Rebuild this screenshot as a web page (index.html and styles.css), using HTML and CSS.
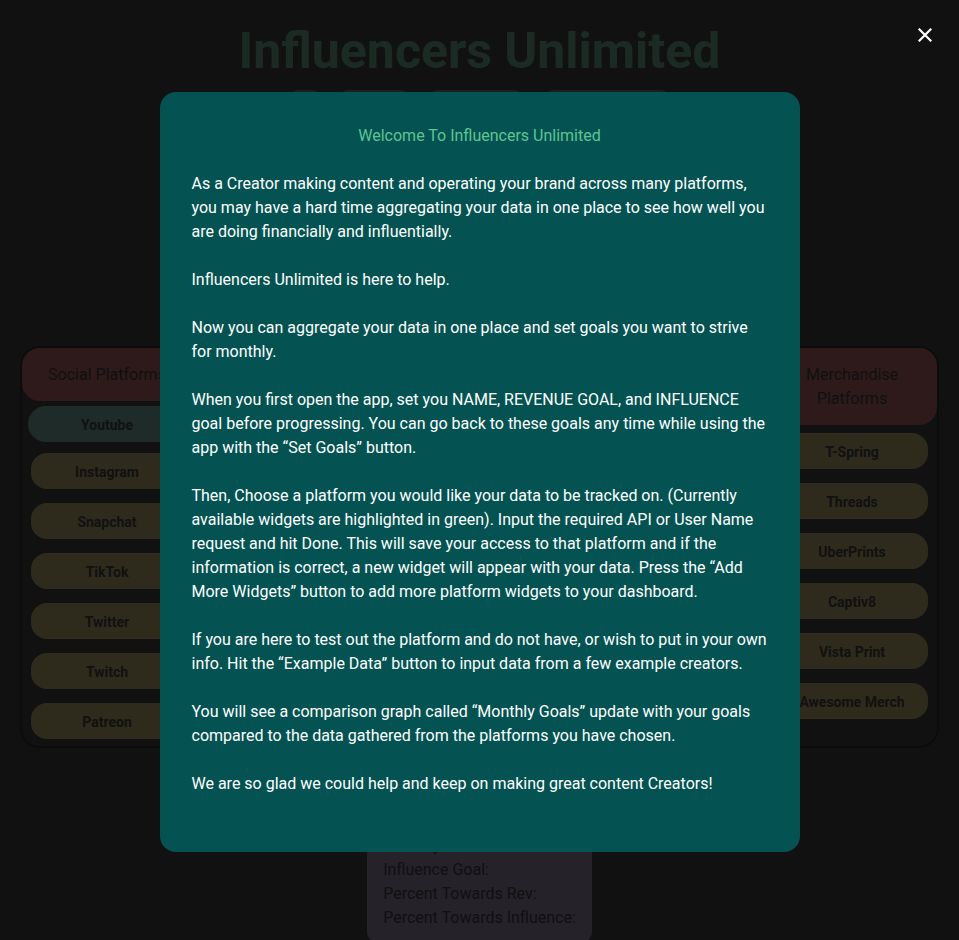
FILE: index.html
```html
<!DOCTYPE html>
<html lang="en">
<head>
<meta charset="utf-8">
<title>Influencers Unlimited</title>
<link rel="stylesheet" href="styles.css">
</head>
<body>
<div class="page">
  <h1 class="app-title">Influencers Unlimited</h1>
  <nav class="nav">
    <button class="nav-btn nav-btn-a">?</button>
    <button class="nav-btn nav-btn-b">Set Goals</button>
    <button class="nav-btn nav-btn-c">Example Data</button>
    <button class="nav-btn nav-btn-d">Add More Widgets</button>
  </nav>
  <main class="board">
    <section class="panel">
      <div class="panel-head">Social Platforms</div>
      <div class="panel-list panel-list-social">
        <button class="plat plat-active">Youtube</button>
        <button class="plat">Instagram</button>
        <button class="plat">Snapchat</button>
        <button class="plat">TikTok</button>
        <button class="plat">Twitter</button>
        <button class="plat">Twitch</button>
        <button class="plat">Patreon</button>
      </div>
    </section>
    <section class="panel">
      <div class="panel-head">Merchandise Platforms</div>
      <div class="panel-list">
        <button class="plat">T-Spring</button>
        <button class="plat">Threads</button>
        <button class="plat">UberPrints</button>
        <button class="plat">Captiv8</button>
        <button class="plat">Vista Print</button>
        <button class="plat">Awesome Merch</button>
      </div>
    </section>
  </main>
  <div class="stats">
    <div>Name:</div>
    <div>Monthly Revenue Goal:</div>
    <div>Influence Goal:</div>
    <div>Percent Towards Rev:</div>
    <div>Percent Towards Influence:</div>
  </div>
</div>

<div class="overlay">
  <button class="close" aria-label="Close">
    <svg width="14" height="14" viewBox="0 0 14 14"><path d="M1.5 1.5 L12.5 12.5 M12.5 1.5 L1.5 12.5" stroke="#ffffff" stroke-width="2.2" stroke-linecap="square" fill="none"/></svg>
  </button>
  <div class="modal">
    <h2 class="modal-title">Welcome To Influencers Unlimited</h2>
    <p>As a Creator making content and operating your brand across many platforms, you may have a hard time aggregating your data in one place to see how well you are doing financially and influentially.</p>
    <p>Influencers Unlimited is here to help.</p>
    <p>Now you can aggregate your data in one place and set goals you want to strive for monthly.</p>
    <p>When you first open the app, set you NAME, REVENUE GOAL, and INFLUENCE goal before progressing. You can go back to these goals any time while using the app with the “Set Goals” button.</p>
    <p>Then, Choose a platform you would like your data to be tracked on. (Currently available widgets are highlighted in green). Input the required API or User Name request and hit Done. This will save your access to that platform and if the information is correct, a new widget will appear with your data. Press the “Add More Widgets” button to add more platform widgets to your dashboard.</p>
    <p>If you are here to test out the platform and do not have, or wish to put in your own info. Hit the “Example Data” button to input data from a few example creators.</p>
    <p>You will see a comparison graph called “Monthly Goals” update with your goals compared to the data gathered from the platforms you have chosen.</p>
    <p>We are so glad we could help and keep on making great content Creators!</p>
  </div>
</div>
</body>
</html>
```

FILE: styles.css
```css
* { box-sizing: border-box; }

html, body {
  margin: 0;
  padding: 0;
}

body {
  background: #555555;
  font-family: Roboto, "Liberation Sans", Arial, sans-serif;
  font-size: 16px;
  line-height: 24px;
  overflow: hidden;
  height: 940px;
}

.page {
  padding-top: 21px;
}

.app-title {
  margin: 0;
  text-align: center;
  font-size: 50px;
  line-height: 60px;
  font-weight: 700;
  color: #87d7b4;
}

.nav {
  margin-top: 9px;
  display: flex;
  justify-content: center;
  gap: 14px;
}

.nav-btn {
  height: 36px;
  border: none;
  border-radius: 12px;
  background: #969696;
  color: #444;
  font-family: inherit;
  font-size: 14px;
  padding: 0;
}
.nav-btn-a { width: 36px; }
.nav-btn-b { width: 75px; }
.nav-btn-c { width: 99px; margin-right: 3px; }
.nav-btn-d { width: 130px; }

.board {
  margin-top: 220px;
  padding: 0 20px;
  display: flex;
  justify-content: space-between;
  align-items: stretch;
}

.panel {
  width: 174px;
  border: 2px solid #3c3c3c;
  border-radius: 20px;
  padding-bottom: 7px;
  display: flex;
  flex-direction: column;
}

.panel-head {
  background: #e68287;
  border-radius: 18px;
  padding: 15px 24px 14px;
  text-align: center;
  color: #505050;
  font-size: 16px;
  line-height: 24px;
}

.panel-list {
  display: flex;
  flex-direction: column;
  align-items: center;
  gap: 14px;
  padding-top: 8px;
}

.panel-list-social {
  padding-top: 5px;
}

.plat {
  width: 152px;
  height: 36px;
  border: none;
  border-radius: 16px;
  background: #e6d28c;
  color: #555555;
  font-family: inherit;
  font-size: 14px;
  font-weight: 700;
  padding: 2px 0 0;
  white-space: nowrap;
}

.plat-active {
  width: 158px;
  background: #96d7c8;
  margin-bottom: -3px;
  border-radius: 18px;
}

.stats {
  margin: 46px auto 0;
  width: fit-content;
  background: #b9aad2;
  border-radius: 10px;
  padding: 16px 16px 12px;
  color: #505050;
  font-size: 16px;
  line-height: 24px;
}

.overlay {
  position: fixed;
  inset: 0;
  background: rgba(0, 0, 0, 0.8);
  display: flex;
  justify-content: center;
  align-items: flex-start;
  padding-top: 92px;
}

.close {
  position: absolute;
  top: 28px;
  right: 27px;
  width: 14px;
  height: 14px;
  padding: 0;
  border: none;
  background: none;
  display: block;
}
.close svg { display: block; }

.modal {
  width: 640px;
  background: #045352;
  border-radius: 16px;
  padding: 32px 32px 32px;
  color: #ffffff;
  font-size: 16px;
  line-height: 24px;
}

.modal-title {
  margin: 0 0 24px;
  text-align: center;
  font-size: 16px;
  line-height: 24px;
  font-weight: 400;
  color: #5fc493;
}

.modal p {
  margin: 0 0 24px;
}
```
